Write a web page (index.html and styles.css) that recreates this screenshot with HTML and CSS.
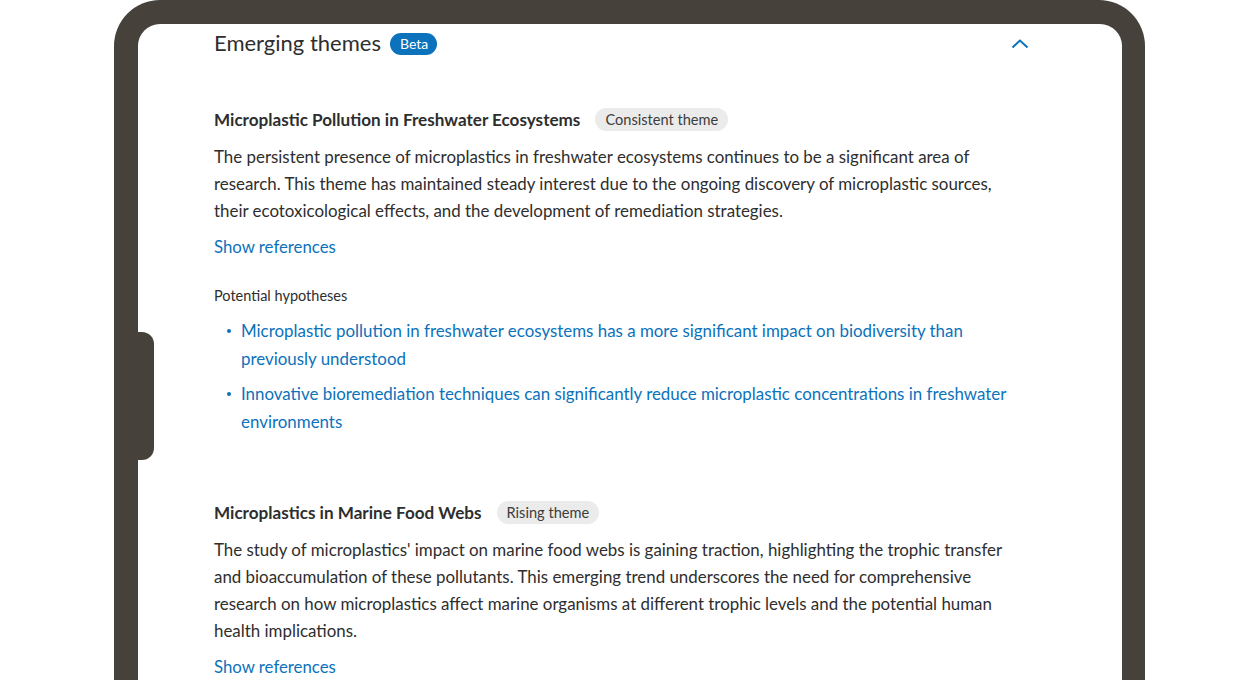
FILE: index.html
```html
<!DOCTYPE html>
<html>
<head>
<meta charset="utf-8">
<link rel="stylesheet" href="styles.css">
</head>
<body>
<div class="stage">
  <div class="device">
    <div class="side-button"></div>
    <div class="screen">
      <div class="content">
        <div class="header">
          <div class="header-title">
            <h2 class="title">Emerging themes</h2>
            <span class="beta">Beta</span>
          </div>
          <svg class="chevron" width="18" height="10" viewBox="0 0 18 10"><path d="M1.5 8.5 L9 1.5 L16.5 8.5" fill="none" stroke="#0b72bb" stroke-width="2"/></svg>
        </div>

        <section class="theme first">
          <div class="theme-head">
            <h3 class="theme-title">Microplastic Pollution in Freshwater Ecosystems</h3>
            <span class="tag">Consistent theme</span>
          </div>
          <p class="para">The persistent presence of microplastics in freshwater ecosystems continues to be a significant area of research. This theme has maintained steady interest due to the ongoing discovery of microplastic sources, their ecotoxicological effects, and the development of remediation strategies.</p>
          <a class="link">Show references</a>
          <div class="hyp-label">Potential hypotheses</div>
          <ul class="hyp-list">
            <li>Microplastic pollution in freshwater ecosystems has a more significant impact on biodiversity than previously understood</li>
            <li>Innovative bioremediation techniques can significantly reduce microplastic concentrations in freshwater environments</li>
          </ul>
        </section>

        <section class="theme second">
          <div class="theme-head">
            <h3 class="theme-title">Microplastics in Marine Food Webs</h3>
            <span class="tag">Rising theme</span>
          </div>
          <p class="para">The study of microplastics' impact on marine food webs is gaining traction, highlighting the trophic transfer and bioaccumulation of these pollutants. This emerging trend underscores the need for comprehensive research on how microplastics affect marine organisms at different trophic levels and the potential human health implications.</p>
          <a class="link">Show references</a>
        </section>
      </div>
    </div>
  </div>
</div>
</body>
</html>
```
FILE: styles.css
```css
* { box-sizing: border-box; }
html, body {
  margin: 0;
  padding: 0;
  background: #ffffff;
  overflow: hidden;
}
body {
  width: 1260px;
  height: 680px;
  font-family: Lato, "Open Sans", sans-serif;
  color: #2e2e2e;
}
.stage {
  padding-left: 114px;
}
.device {
  position: relative;
  width: 1031px;
  height: 800px;
  background: #46423b;
  border-radius: 46px;
  padding: 24px 23px 0 24px;
}
.side-button {
  position: absolute;
  left: 24px;
  top: 332px;
  width: 16px;
  height: 128px;
  background: #46423b;
  border-radius: 0 12px 12px 0;
  z-index: 2;
}
.screen {
  background: #ffffff;
  border-radius: 22px;
  height: 100%;
}
.content {
  padding: 0 94px 0 76px;
}
.header {
  height: 38px;
  display: flex;
  align-items: center;
  justify-content: space-between;
}
.header-title {
  display: flex;
  align-items: center;
  gap: 9px;
}
.title {
  margin: 0;
  font-size: 22px;
  font-weight: 400;
  color: #2e2e2e;
  line-height: 30px;
}
.beta {
  display: inline-flex;
  align-items: center;
  height: 22px;
  padding: 0 9px 0 10px;
  border-radius: 11px;
  background: #0b72bb;
  color: #ffffff;
  font-size: 14px;
  margin-top: 1px;
}
.chevron {
  display: block;
  margin-top: 1px;
  margin-right: -1px;
}
.theme.first { margin-top: 45px; }
.theme.second { margin-top: 65px; }
.theme-head {
  display: flex;
  align-items: center;
  gap: 15px;
  height: 24px;
}
.theme-title {
  margin: 0;
  font-size: 17.1px;
  font-weight: 700;
  color: #2e2e2e;
}
.tag {
  display: inline-flex;
  align-items: center;
  height: 23px;
  padding: 0 10px;
  border-radius: 12px;
  background: #ebebeb;
  color: #3c3c3c;
  font-size: 14.6px;
}
.para {
  margin: 12px 0 0;
  font-size: 16.9px;
  line-height: 27px;
  color: #2e2e2e;
}
.link {
  display: block;
  margin-top: 9px;
  font-size: 16.8px;
  line-height: 27px;
  color: #0b72bb;
}
.hyp-label {
  margin-top: 26px;
  font-size: 14.5px;
  line-height: 20px;
  color: #2e2e2e;
}
.hyp-list {
  margin: 11px 0 0;
  padding: 0 0 0 27px;
  list-style: none;
}
.hyp-list li {
  position: relative;
  font-size: 16.9px;
  line-height: 27.5px;
  color: #0b72bb;
}
.hyp-list li + li { margin-top: 8px; }
.hyp-list li::before {
  content: "";
  position: absolute;
  left: -14px;
  top: 12px;
  width: 4px;
  height: 4px;
  border-radius: 50%;
  background: #0b72bb;
}
```
